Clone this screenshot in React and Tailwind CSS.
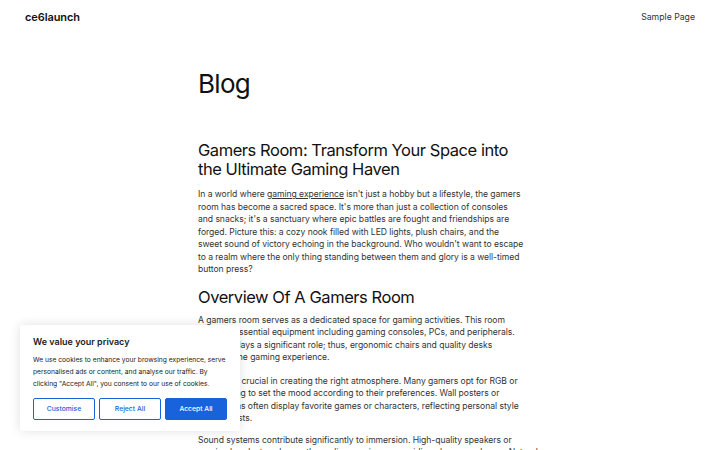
import React from "react";

const font = { fontFamily: "Inter, 'Noto Sans', sans-serif" };

function Header() {
  return (
    <header className="flex items-center justify-between h-[35px] px-[25px]">
      <a className="text-[11px] font-semibold text-[#111] tracking-[-0.1px]">ce6launch</a>
      <nav className="text-[8.7px] text-[#333]">Sample Page</nav>
    </header>
  );
}

function CookieBanner() {
  return (
    <div className="absolute left-[20px] top-[325px] w-[220px] bg-white rounded-[3px] shadow-[0_0_12px_rgba(0,0,0,0.12)] px-[13px] pt-[11px] pb-[11px]">
      <p className="text-[9px] font-semibold text-[#212121] leading-[12px]">We value your privacy</p>
      <p className="mt-[6px] text-[6.7px] leading-[12px] text-[#212121]">
        We use cookies to enhance your browsing experience, serve personalised ads or content, and analyse our traffic. By clicking "Accept All", you consent to our use of cookies.
      </p>
      <div className="mt-[8px] flex gap-[4px]">
        <button className="flex-1 h-[22px] border border-[#1863dc] rounded-[2px] text-[6.8px] font-medium text-[#1863dc] bg-white">Customise</button>
        <button className="flex-1 h-[22px] border border-[#1863dc] rounded-[2px] text-[6.8px] font-medium text-[#1863dc] bg-white">Reject All</button>
        <button className="flex-1 h-[22px] border border-[#1863dc] rounded-[2px] text-[6.8px] font-medium text-white bg-[#1863dc]">Accept All</button>
      </div>
    </div>
  );
}

const para = "w-[345px] text-[8.6px] leading-[12.5px] tracking-[-0.05px]";

export default function App() {
  return (
    <div style={font} className="relative w-[720px] h-[450px] overflow-hidden bg-white text-[#333]">
      <Header />
      <main className="w-[324px] mx-auto">
        <h1 className="mt-[32px] text-[26px] leading-[34px] font-normal text-[#111] tracking-[-0.7px]">Blog</h1>
        <article className="mt-[40px]">
          <h2 className="text-[16.5px] leading-[19px] text-[#111] font-normal tracking-[-0.45px]">
            Gamers Room: Transform Your Space into the Ultimate Gaming Haven
          </h2>
          <p className={"mt-[9px] " + para}>
            In a world where <a className="underline">gaming experience</a> isn't just a hobby but a lifestyle, the gamers<br />
            room has become a sacred space. It's more than just a collection of consoles<br />
            and snacks; it's a sanctuary where epic battles are fought and friendships are<br />
            forged. Picture this: a cozy nook filled with LED lights, plush chairs, and the<br />
            sweet sound of victory echoing in the background. Who wouldn't want to escape<br />
            to a realm where the only thing standing between them and glory is a well-timed<br />
            button press?
          </p>
          <h2 className="mt-[10px] text-[16.5px] leading-[22px] text-[#111] font-normal tracking-[-0.45px]">
            Overview Of A Gamers Room
          </h2>
          <p className={"mt-[6px] " + para}>
            A gamers room serves as a dedicated space for gaming activities. This room<br />
            includes essential equipment including gaming consoles, PCs, and peripherals.<br />
            Comfort plays a significant role; thus, ergonomic chairs and quality desks<br />
            enhance the gaming experience.
          </p>
          <p className={"mt-[11px] " + para}>
            Lighting is crucial in creating the right atmosphere. Many gamers opt for RGB or<br />
            LED lighting to set the mood according to their preferences. Wall posters or<br />
            decorations often display favorite games or characters, reflecting personal style<br />
            and interests.
          </p>
          <p className={"mt-[9px] " + para}>
            Sound systems contribute significantly to immersion. High-quality speakers or<br />
            gaming headsets enhance the audio experience, providing clear sound cues. Natural<br />
            elements also make a difference.
          </p>
        </article>
      </main>
      <CookieBanner />
    </div>
  );
}
